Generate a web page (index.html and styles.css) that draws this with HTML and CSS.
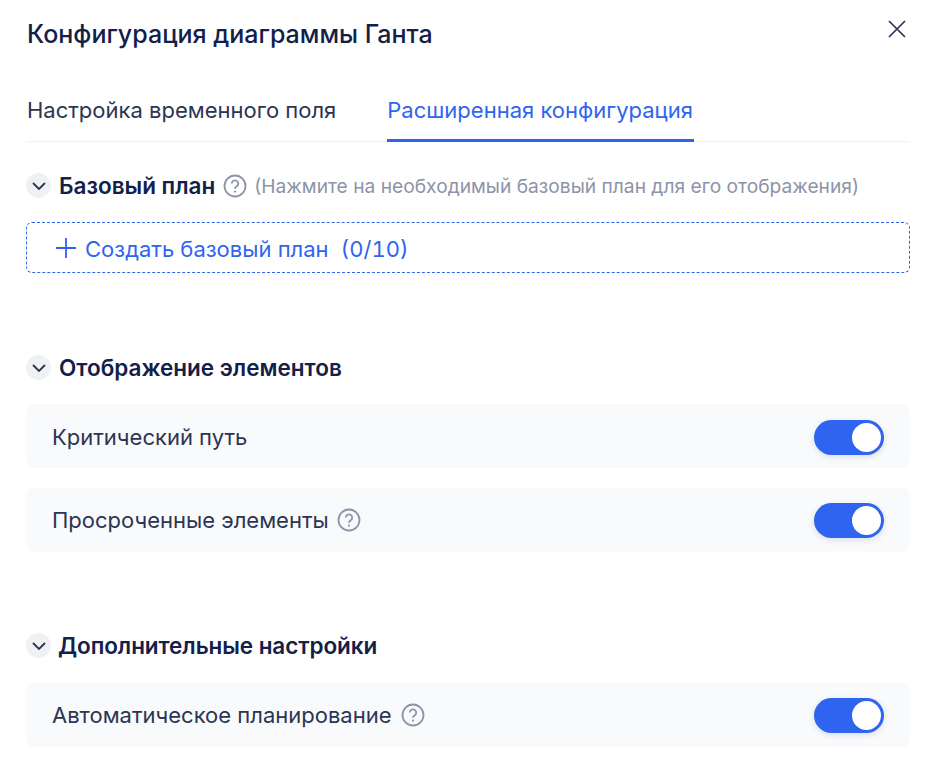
FILE: index.html
```html
<!DOCTYPE html>
<html lang="ru">
<head>
<meta charset="utf-8">
<title>Конфигурация диаграммы Ганта</title>
<link rel="stylesheet" href="styles.css">
</head>
<body>
<div class="dialog">
  <header class="header">
    <h1 class="title">Конфигурация диаграммы Ганта</h1>
    <svg class="close" viewBox="0 0 18 18" width="18" height="18"><path d="M1 1L17 17M17 1L1 17"/></svg>
  </header>
  <nav class="tabs">
    <span class="tab">Настройка временного поля</span>
    <span class="tab active">Расширенная конфигурация</span>
  </nav>

  <section class="section first">
    <div class="sec-head">
      <span class="chev"><svg viewBox="0 0 14 8" width="14" height="8"><path d="M1 1L7 7L13 1"/></svg></span>
      <h2 class="sec-title">Базовый план</h2>
      <svg class="help help-head" viewBox="0 0 24 24" width="24" height="24"><circle cx="12" cy="12" r="10.5"/><path d="M8.8 9.6a3.2 3.2 0 1 1 4.9 2.7c-1 .7-1.7 1.2-1.7 2.5"/><circle class="dot" cx="12" cy="17.6" r="1.1"/></svg>
      <span class="hint">(Нажмите на необходимый базовый план для его отображения)</span>
    </div>
    <div class="add">
      <svg class="plus" viewBox="0 0 20 20" width="20" height="20"><path d="M10 0V20M0 10H20"/></svg>
      <span class="add-text">Создать базовый план</span>
      <span class="add-text add-count">(0/10)</span>
    </div>
  </section>

  <section class="section second">
    <div class="sec-head">
      <span class="chev"><svg viewBox="0 0 14 8" width="14" height="8"><path d="M1 1L7 7L13 1"/></svg></span>
      <h2 class="sec-title">Отображение элементов</h2>
    </div>
    <div class="rows">
      <div class="row row-low">
        <span class="row-label">Критический путь</span>
        <span class="toggle"><span class="knob"></span></span>
      </div>
      <div class="row">
        <span class="row-label">Просроченные элементы
          <svg class="help" viewBox="0 0 24 24" width="24" height="24"><circle cx="12" cy="12" r="10.5"/><path d="M8.8 9.6a3.2 3.2 0 1 1 4.9 2.7c-1 .7-1.7 1.2-1.7 2.5"/><circle class="dot" cx="12" cy="17.6" r="1.1"/></svg>
        </span>
        <span class="toggle"><span class="knob"></span></span>
      </div>
    </div>
  </section>

  <section class="section third">
    <div class="sec-head">
      <span class="chev"><svg viewBox="0 0 14 8" width="14" height="8"><path d="M1 1L7 7L13 1"/></svg></span>
      <h2 class="sec-title sec-title-tight">Дополнительные настройки</h2>
    </div>
    <div class="rows">
      <div class="row">
        <span class="row-label">Автоматическое планирование
          <svg class="help help-near" viewBox="0 0 24 24" width="24" height="24"><circle cx="12" cy="12" r="10.5"/><path d="M8.8 9.6a3.2 3.2 0 1 1 4.9 2.7c-1 .7-1.7 1.2-1.7 2.5"/><circle class="dot" cx="12" cy="17.6" r="1.1"/></svg>
        </span>
        <span class="toggle"><span class="knob"></span></span>
      </div>
    </div>
  </section>
</div>
</body>
</html>
```
FILE: styles.css
```css
* { box-sizing: border-box; }
html, body { margin: 0; height: 100%; background: #fff; overflow: hidden; }
body { font-family: Inter, "Liberation Sans", sans-serif; color: #2b3553; }
.dialog { padding: 0 20px 0 26px; }
.header { display: flex; justify-content: space-between; height: 68px; padding: 20px 4px 0 1px; }
.title { margin: 0; font-size: 25px; line-height: 29px; font-weight: 500; color: #13204a; }
.close { fill: none; stroke: #2b3553; stroke-width: 1.7; }
.tabs { display: flex; gap: 51px; height: 74px; padding-left: 1px; border-bottom: 1px solid #f0f1f4; }
.tab { height: 74px; padding-top: 29px; font-size: 22px; line-height: 27px; }
.tab.active { flex: none; width: 307px; color: #2f64f0; border-bottom: 3px solid #2f64f0; }
.section.first { padding-top: 31px; }
.section.second { padding-top: 82px; }
.section.third { padding-top: 81px; }
.sec-head { display: flex; align-items: center; height: 25px; }
.chev { flex: none; width: 25px; height: 25px; border-radius: 50%; background: #f0f1f5; display: flex; align-items: center; justify-content: center; margin-right: 8px; }
.chev svg { fill: none; stroke: #2b3553; stroke-width: 1.8; }
.sec-title { margin: 0; font-size: 22.5px; line-height: 26px; font-weight: 600; color: #13204a; }
.sec-title-tight { margin-left: -1px; letter-spacing: -0.08px; }
.help { fill: none; stroke: #8d93a8; stroke-width: 1.8; vertical-align: -4px; margin-left: 2px; }
.help .dot { fill: #8d93a8; stroke: none; }
.help-near { margin-left: 3px; }
.help-head { margin-left: 8px; flex: none; }
.hint { margin-left: 7px; font-size: 19.2px; line-height: 24px; color: #8d93a8; white-space: nowrap; }
.add { display: flex; align-items: center; height: 51px; margin-top: 24px; padding-left: 29px; padding-top: 1px; border: 1px dashed #2f64f0; border-radius: 6px; color: #2f64f0; }
.plus { flex: none; fill: none; stroke: #2f64f0; stroke-width: 1.8; margin-right: 9px; }
.add-text { padding-top: 2px; font-size: 22px; line-height: 26px; }
.add-count { margin-left: 12px; font-variant-numeric: tabular-nums; }
.rows { display: flex; flex-direction: column; gap: 20px; margin-top: 24px; }
.section.third .rows { margin-top: 25px; }
.row { display: flex; align-items: center; justify-content: space-between; height: 64px; padding: 0 26px; background: #f9fafb; border-radius: 8px; }
.row-low { padding-top: 2px; }
.row-label { font-size: 22px; line-height: 27px; color: #2b3553; }
.toggle { flex: none; display: flex; align-items: center; justify-content: flex-end; width: 70px; height: 35px; padding-right: 3px; border-radius: 18px; background: #2f64f0; box-shadow: 0 2px 6px rgba(47, 70, 140, 0.15); }
.knob { width: 29px; height: 29px; border-radius: 50%; background: #fff; }
```
